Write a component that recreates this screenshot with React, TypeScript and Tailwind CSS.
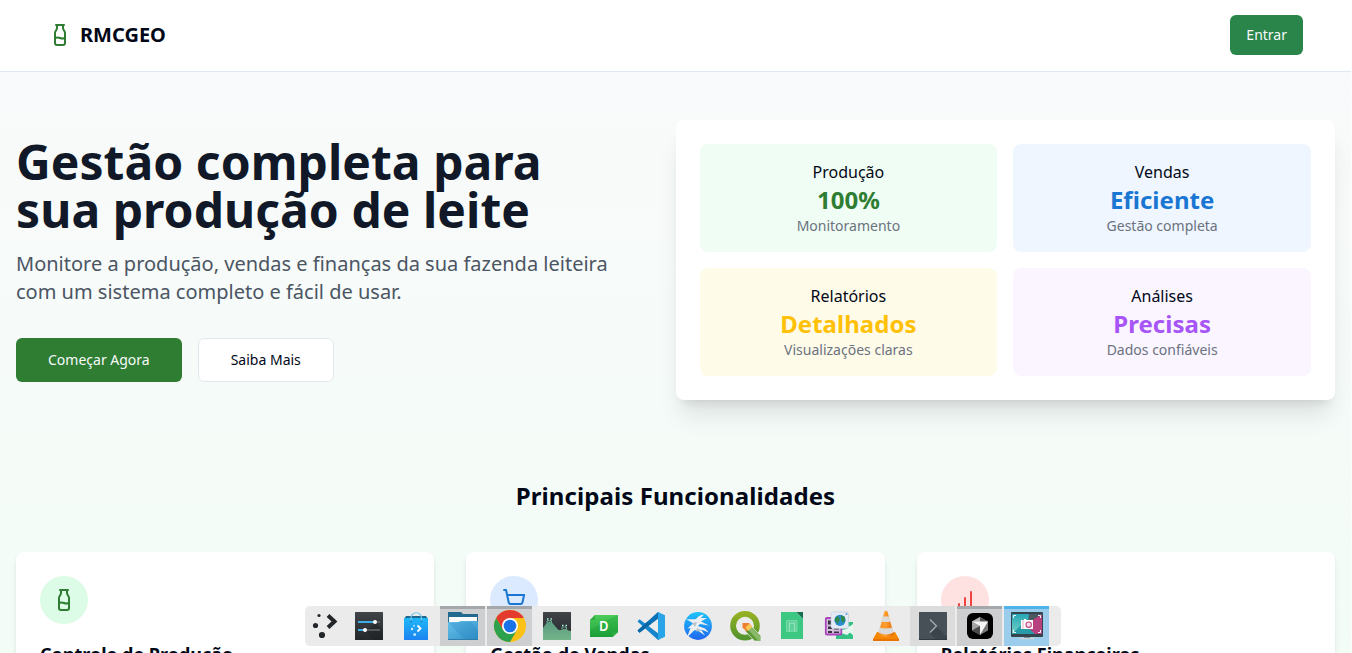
import React from "react";

const FONT = "font-['Noto_Sans',sans-serif]";

function Milk({ className = "" }: { className?: string }) {
  return (
    <svg className={className} width="24" height="24" viewBox="0 0 24 24" fill="none" stroke="currentColor" strokeWidth="2" strokeLinecap="round" strokeLinejoin="round">
      <path d="M8 2h8" />
      <path d="M9 2v2.789a4 4 0 0 1-.672 2.219l-.656.984A4 4 0 0 0 7 10.212V20a2 2 0 0 0 2 2h6a2 2 0 0 0 2-2v-9.789a4 4 0 0 0-.672-2.219l-.656-.984A4 4 0 0 1 15 4.788V2" />
      <path d="M7 15a6.472 6.472 0 0 1 5 0 6.47 6.47 0 0 0 5 0" />
    </svg>
  );
}

function Cart({ className = "" }: { className?: string }) {
  return (
    <svg className={className} width="24" height="24" viewBox="0 0 24 24" fill="none" stroke="currentColor" strokeWidth="2" strokeLinecap="round" strokeLinejoin="round">
      <circle cx="8" cy="21" r="1" />
      <circle cx="19" cy="21" r="1" />
      <path d="M2.05 2.05h2l2.66 12.42a2 2 0 0 0 2 1.58h9.78a2 2 0 0 0 1.95-1.57l1.65-7.43H5.12" />
    </svg>
  );
}

function Bars({ className = "" }: { className?: string }) {
  return (
    <svg className={className} width="24" height="24" viewBox="0 0 24 24" fill="none" stroke="currentColor" strokeWidth="2" strokeLinecap="round" strokeLinejoin="round">
      <path d="M12 20V10M18 20V4M6 20v-4" />
    </svg>
  );
}

const stats = [
  { label: "Produção", value: "100%", note: "Monitoramento", bg: "bg-[#f0fdf4]", fg: "text-[#2e7d32]" },
  { label: "Vendas", value: "Eficiente", note: "Gestão completa", bg: "bg-[#eff6ff]", fg: "text-[#1976d2]" },
  { label: "Relatórios", value: "Detalhados", note: "Visualizações claras", bg: "bg-[#fffbe9]", fg: "text-[#ffc107]" },
  { label: "Análises", value: "Precisas", note: "Dados confiáveis", bg: "bg-[#faf5ff]", fg: "text-[#a855f7]" },
];

const features = [
  { title: "Controle de Produção", bg: "bg-[#dcfce7]", icon: <Milk className="text-[#2e7d32]" /> },
  { title: "Gestão de Vendas", bg: "bg-[#dbeafe]", icon: <Cart className="text-[#1976d2]" /> },
  { title: "Relatórios Financeiros", bg: "bg-[#fee2e2]", icon: <Bars className="text-[#ef4444]" /> },
];

type Task = { name: string; state?: "open" | "dim" | "active"; art: React.ReactNode };

const tasks: Task[] = [
  {
    name: "settings",
    art: (
      <>
        <defs>
          <linearGradient id="dark" x1="0" y1="0" x2="0" y2="1"><stop offset="0" stopColor="#404347" /><stop offset="1" stopColor="#25282b" /></linearGradient>
        </defs>
        <rect x="9" y="6" width="28" height="28" rx=".6" fill="url(#dark)" />
        <path d="M19 25 28 34h9V24l-7-7z" fill="#1b1e20" opacity=".35" />
        <path d="M12 16h22M12 24h22" stroke="#55595d" strokeWidth="2" />
        <path d="M12 16h16M12 24h6" stroke="#3daee9" strokeWidth="2" />
        <circle cx="29" cy="16" r="2" fill="#fff" />
        <circle cx="19" cy="24" r="2" fill="#fff" />
      </>
    ),
  },
  {
    name: "store",
    art: (
      <>
        <defs>
          <linearGradient id="bag" x1="0" y1="0" x2="0" y2="1"><stop offset="0" stopColor="#1fb8f8" /><stop offset="1" stopColor="#1c82f0" /></linearGradient>
        </defs>
        <path d="m13 10h20l2 3H11z" fill="#22678c" />
        <rect x="11" y="12" width="24" height="22" rx=".6" fill="url(#bag)" />
        <path d="M18 15v-3a5 5 0 0 1 10.500 0v3" fill="none" stroke="#79c7e8" strokeWidth="1.200" />
        <circle cx="18" cy="15.500" r="1" fill="#197cc1" /><circle cx="28.500" cy="15.500" r="1" fill="#197cc1" />
        <path d="m24.500 19.500 3 3-3 3" fill="none" stroke="#fff" strokeWidth="1.800" />
        <circle cx="21" cy="19.800" r=".9" fill="#cceeff" /><circle cx="19" cy="23" r="1.200" fill="#cceeff" /><circle cx="21.700" cy="28.600" r="1.400" fill="#cceeff" />
      </>
    ),
  },
  {
    name: "files",
    state: "open",
    art: (
      <>
        <defs>
          <linearGradient id="fold" x1="0" y1="0" x2="1" y2="1"><stop offset="0" stopColor="#65c0ea" /><stop offset="1" stopColor="#3190c8" /></linearGradient>
        </defs>
        <path d="M8 6h13l2 2h15v14H8z" fill="#23688e" />
        <path d="M9 11h28v8H9z" fill="#fafafa" />
        <path d="M8 16h10l3-1h17v19H8z" fill="url(#fold)" />
        <path d="m9 17 16 17h13V24l-7-8z" fill="#217cb4" opacity=".22" />
        <path d="M8 33.500h30" stroke="#2c7eac" />
      </>
    ),
  },
  {
    name: "chrome",
    state: "open",
    art: (
      <>
        <circle cx="23" cy="20" r="16" fill="#fbc116" />
        <path d="M9.140 12a16 16 0 0 1 27.720 0H23l-6.930 12z" fill="#e33b2e" />
        <path d="M9.140 12a16 16 0 0 0 13.860 24l6.930-12h-13.860z" fill="#2da14c" />
        <circle cx="23" cy="20" r="8" fill="#fff" />
        <circle cx="23" cy="20" r="6.300" fill="#1a73e8" />
      </>
    ),
  },
  {
    name: "monitor",
    art: (
      <>
        <defs>
          <linearGradient id="hill" x1="0" y1="0" x2="0" y2="1"><stop offset="0" stopColor="#5a9a80" /><stop offset="1" stopColor="#74b48a" /></linearGradient>
        </defs>
        <rect x="9" y="6" width="28" height="28" rx=".6" fill="url(#dark)" />
        <path d="M9 22 13 16.500q2.500-2 5 0L24 23.500q2 1 4 0 3-1.500 5 0 2 1.500 4 1.500V34H9z" fill="url(#hill)" />
        <path d="M13 16.500V14.500h4.500v2M28 23v-2h4.500v2" fill="none" stroke="#7fc7ae" strokeWidth="1" strokeDasharray="1.500 .8" />
        <path d="M13 13h1.500M16.500 13H18M28 19.500h1.500M31.500 19.500H33" stroke="#a9eed9" strokeWidth="1.300" />
      </>
    ),
  },
  {
    name: "draw",
    art: (
      <>
        <defs>
          <linearGradient id="dg" x1="0" y1="0" x2="0" y2="1"><stop offset="0" stopColor="#4ccb59" /><stop offset="1" stopColor="#20a53b" /></linearGradient>
        </defs>
        <path d="M14 9h23v17l-5.500 5H9V14z" fill="url(#dg)" />
        <path d="m9 25 13-9 15-7v17l-5.500 5H9z" fill="#088b2b" opacity=".22" />
        <path d="M14 9v5H9zM31.500 31v-5H37z" fill="#2fae43" />
        <text x="22.700" y="25.300" textAnchor="middle" className="font-['Noto_Sans',sans-serif] text-[15px] font-semibold" textLength="9.500" lengthAdjust="spacingAndGlyphs" fill="#fff">D</text>
      </>
    ),
  },
  {
    name: "code",
    art: (
      <>
        <path d="m9.500 24.500 2 2.300L31 12V6h-1z" fill="#0a70b5" />
        <path d="m9.500 15.500 2-2.300L31 28v6h-1z" fill="#1585cb" />
        <path d="m9.500 24.500 9.500-8.500 4.200 1.800L11.500 26.800z" fill="#0867a6" />
        <path d="m30 6 7 3.200v21.600L30 34z" fill="#28a5e9" />
        <path d="M30 13.500v13L21.500 20z" fill="#ececed" />
      </>
    ),
  },
  {
    name: "bird",
    art: (
      <>
        <defs>
          <linearGradient id="sky" x1="0" y1="0" x2="0" y2="1"><stop offset="0" stopColor="#1dc3fb" /><stop offset="1" stopColor="#2067ef" /></linearGradient>
        </defs>
        <circle cx="23" cy="20" r="13.900" fill="url(#sky)" />
        <path d="M11 13.500c4-1 7 .5 10-.5 2-2.500 4-4 8-4.500l-3 3.500 6 0-6 3.500 8 4-9-1.500-2 2 7 2.500 4 4-8-3 4 6-8-5.500-3 .5-7 7 3.500-9.500-3 .5 5.500-5c-2-2-4-3-7-4z" fill="#eceff2" />
        <path d="m17 17 5-1-2 5zM22 22l5 2.500-6 1z" fill="#b8c2c9" />
      </>
    ),
  },
  {
    name: "gis",
    art: (
      <>
        <defs>
          <linearGradient id="q" x1="0" y1="0" x2="0" y2="1"><stop offset="0" stopColor="#93b023" /><stop offset="1" stopColor="#55952d" /></linearGradient>
        </defs>
        <circle cx="23" cy="19.800" r="11.900" fill="none" stroke="url(#q)" strokeWidth="5.800" />
        <path d="m23 25 5-6 10.500 10.500V35H32.500z" fill="#5d9a35" stroke="#ececed" strokeWidth=".7" />
        <path d="m25.500 23 3-3 10 10.500V35h-2z" fill="#8ab96a" />
        <path d="M20.500 17h6.500l3 3.500-5.500 5-4-4z" fill="#ef7e2d" />
        <path d="m23.500 21.500 3.800-3.800 3.200 3-4.500 4.300z" fill="#f7ca55" />
      </>
    ),
  },
  {
    name: "document",
    art: (
      <>
        <path d="M12 6h15l7 7v20H12z" fill="#3cc783" />
        <path d="M27 6h7v7z" fill="#27855b" />
        <path d="m28 6 6 6V6z" fill="#176e50" />
        <path d="M17.500 14.500h10.500v11H17.500z" fill="#5ed099" stroke="#86dfb0" strokeWidth=".7" />
        <path d="M20 17h6M20.500 17v8M25.500 17v8" fill="none" stroke="#a6ebc8" strokeWidth=".8" />
      </>
    ),
  },
  {
    name: "import",
    art: (
      <>
        <path d="M20 16h17v17H20z" fill="#35c284" />
        <path d="m31 19 2.500 1.500L37 18v11l-3-2.500-3 2.500-6-2v-3l6-1z" fill="#e5f7ee" />
        <rect x="9.800" y="12" width="15.500" height="16.500" rx="1" fill="#d0bfd8" stroke="#ac45bb" strokeWidth="1.800" />
        <path d="M12 14.500h4v4h-4zM12 20.500h4v2.500h-4zM18 20.500h5v3h-5zM12 25h4v2h-4zM18 25.500h5V27h-5z" fill="#382f42" />
        <rect x="15" y="6" width="17.500" height="16.500" rx="2" fill="#e3eaf4" stroke="#b8c7da" strokeWidth=".6" />
        <circle cx="24" cy="14.300" r="5.600" fill="#268fd3" />
        <path d="m19 12 3-2 2 3-2 5-3-3zM25 9l4 2v4l-3 2-1-4z" fill="#308851" />
        <circle cx="30.500" cy="8" r="1" fill="#629ce0" />
      </>
    ),
  },
  {
    name: "player",
    art: (
      <>
        <defs>
          <linearGradient id="cone"><stop offset="0" stopColor="#f28a1a" /><stop offset=".45" stopColor="#ffa030" /><stop offset="1" stopColor="#e06800" /></linearGradient>
        </defs>
        <path d="M14 26h18l4 7v2H10v-2z" fill="#f58600" />
        <path d="M10 33h26v2H10z" fill="#e87300" />
        <path d="M21.500 5.500q1.500-1.500 3 0L31 29q-8 4-16 0z" fill="url(#cone)" />
        <path d="m20 10.500h6l1.500 5q-4.500 1-9 0z" fill="#dcdcdc" />
        <path d="m16.800 21.500q6.200 2 12.400 0l1.500 5q-7.700 4-15.400 0z" fill="#dadada" />
      </>
    ),
  },
  {
    name: "terminal",
    state: "dim",
    art: (
      <>
        <rect x="9" y="6" width="28" height="28" rx=".6" fill="#475057" />
        <path d="m20 27 7-7-7-6 17 17v3H27z" fill="#293136" opacity=".4" />
        <path d="m20 13.500 6.500 6.500-6.500 6.500" fill="none" stroke="#a8b0b4" strokeWidth="1.200" />
        <path d="M9 33.500h28" stroke="#30383d" />
      </>
    ),
  },
  {
    name: "cursor",
    state: "open",
    art: (
      <>
        <rect x="10" y="7" width="26" height="26" rx="6" fill="#000" />
        <path d="m23 11 8 4.500v9L23 29l-8-4.500v-9z" fill="#777" />
        <path d="M15 15.500 23 11v5z" fill="#b4b4b4" />
        <path d="m23 11 8 4.500-8 .5z" fill="#555" />
        <path d="M15 15.500v9l8-4.500z" fill="#a3a3a3" />
        <path d="M15 15.500 31 15.500 23 29V20z" fill="#f4f4f4" />
        <path d="m15 24.500 8-4.500v9z" fill="#4a4a4a" />
      </>
    ),
  },
  {
    name: "capture",
    state: "active",
    art: (
      <>
        <defs>
          <linearGradient id="scr" x1="0" y1="0" x2="0" y2="1"><stop offset="0" stopColor="#29a7b8" /><stop offset="1" stopColor="#71d3c4" /></linearGradient>
        </defs>
        <rect x="7" y="6" width="32" height="25" rx="1" fill="#35434a" />
        <path d="M8 8h30v20H8z" fill="url(#scr)" />
        <path d="M38 8v20H29L18 18z" fill="#b7407f" />
        <path d="m8 28 11-11 12 11z" fill="#289aa8" />
        <path d="m25 8h13L24 17z" fill="#4b5960" />
        <path d="M9.500 12V9.500H12M34 9.500h2.500V12M9.500 24v2.500H12M34 26.500h2.500V24" fill="none" stroke="#e8f6fa" />
        <path d="M17 14h3v-1h2v1h7v9H17z" fill="#fff" />
        <circle cx="24.700" cy="18.700" r="2.700" fill="#f5dbe8" stroke="#c04480" strokeWidth="1.100" />
        <path d="M19 14v9" stroke="#c87996" strokeWidth=".6" />
        <path d="M20 31h6v1h-6z" fill="#68767d" />
        <path d="M15.500 32.500h15" stroke="#c9d3d9" strokeWidth="1.400" />
      </>
    ),
  },
];

function Taskbar() {
  return (
    <div className="absolute left-[305px] top-[606px] flex h-10 w-[756px] gap-[2px] overflow-hidden rounded-[5px] bg-[#ebebec]">
      <svg className="shrink-0" width="39" height="40" viewBox="0 0 39 40">
        <circle cx="14" cy="9.500" r="1.600" fill="#232629" />
        <circle cx="10.500" cy="19.500" r="2.600" fill="#232629" />
        <circle cx="17" cy="29" r="3.100" fill="#232629" />
        <path d="m23 9.500 6.500 6-6.500 6" fill="none" stroke="#232629" strokeWidth="4" />
      </svg>
      {tasks.map((t) => (
        <div
          key={t.name}
          className={
            "h-10 w-[45px] shrink-0 " +
            (t.state === "open"
              ? "bg-[#cecfd0] shadow-[inset_0_3px_0_#a5a8aa]"
              : t.state === "active"
                ? "bg-[#9bcceb] shadow-[inset_0_3px_0_#4db3e8]"
                : t.state === "dim"
                  ? "bg-[#dcdcdd]"
                  : "")
          }
        >
          <svg width="45" height="40" viewBox="0 0 45 40">{t.art}</svg>
        </div>
      ))}
    </div>
  );
}

export default function App() {
  return (
    <div className={`relative h-[653px] w-[1352px] overflow-hidden bg-[#fbfcfc] text-[#020817] ${FONT}`}>
      <div className="h-[653px] w-[1351px] overflow-hidden">
        <header className="flex h-[72px] items-start justify-between border-b border-[#e2e8f0] bg-white px-12 pt-[15px]">
          <div className="flex h-10 items-center gap-2">
            <Milk className="text-[#2e7d32]" />
            <span className="text-xl font-bold leading-7">RMCGEO</span>
          </div>
          <button className="h-10 rounded-md bg-[#2a854b] px-4 text-sm text-[#f8fafc]">Entrar</button>
        </header>
        <main className="h-[800px] bg-linear-to-b/srgb from-[#f9fafb] to-[#f0fdf4] px-4 pt-12">
          <section className="flex items-center">
            <div className="w-1/2">
              <h1 className="text-5xl font-bold leading-none tracking-[0.04px] text-[#111827]">
                Gestão completa para
                <br />
                sua produção de leite
              </h1>
              <p className="mt-4 text-xl leading-7 text-[#4b5563]">
                Monitore a produção, vendas e finanças da sua fazenda leiteira
                <br />
                com um sistema completo e fácil de usar.
              </p>
              <div className="mt-8 flex gap-4">
                <button className="h-11 rounded-md bg-[#2e7d32] px-8 text-sm text-[#f8fafc]">Começar Agora</button>
                <button className="h-11 rounded-md border border-[#e2e8f0] bg-white px-8 text-sm">Saiba Mais</button>
              </div>
            </div>
            <div className="grid w-1/2 grid-cols-2 gap-4 rounded-lg bg-white p-6 shadow-xl">
              {stats.map((s) => (
                <div key={s.label} className={`h-[108px] rounded-lg p-4 text-center ${s.bg}`}>
                  <p className="text-base leading-6">{s.label}</p>
                  <p className={`text-2xl font-bold leading-8 tracking-[0.04px] ${s.fg}`}>{s.value}</p>
                  <p className="text-sm leading-5 text-[#6b7280]">{s.note}</p>
                </div>
              ))}
            </div>
          </section>
          <section className="pt-20">
            <h2 className="text-center text-2xl font-bold leading-8 tracking-[0.08px]">Principais Funcionalidades</h2>
            <div className="mt-10 grid grid-cols-3 gap-8">
              {features.map((f) => (
                <div key={f.title} className="h-[220px] rounded-lg bg-white p-6 shadow-md">
                  <div className={`flex size-12 items-center justify-center rounded-full ${f.bg}`}>{f.icon}</div>
                  <h3 className="mt-4 text-lg font-bold leading-7">{f.title}</h3>
                </div>
              ))}
            </div>
          </section>
        </main>
      </div>
      <Taskbar />
    </div>
  );
}
